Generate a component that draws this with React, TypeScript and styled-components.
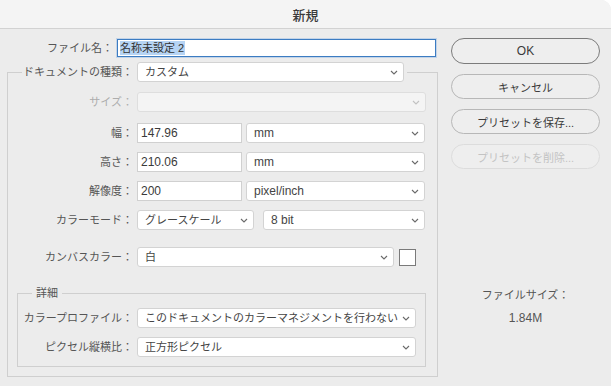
import React from "react";
import styled, { createGlobalStyle } from "styled-components";

const GlobalStyle = createGlobalStyle`
  html, body { margin: 0; padding: 0; background: #ffffff; }
  body { font-family: "Liberation Sans", "Noto Sans CJK JP", sans-serif; }
  *, *::before, *::after { box-sizing: border-box; }
`;

const Window = styled.div`
  width: 611px;
  height: 386px;
  background: #ececec;
  border-top-right-radius: 10px;
  overflow: hidden;
  display: flex;
  flex-direction: column;
`;

const TitleBar = styled.div`
  height: 29px;
  flex: none;
  background: #f4f4f4;
  border-bottom: 1px solid #d2d2d2;
  display: flex;
  align-items: center;
  justify-content: center;
  font-size: 13px;
  font-weight: 500;
  color: #3a3a3a;
`;

const Body = styled.div`
  flex: 1;
  display: flex;
  padding: 9px 0 0 7px;
`;

const Main = styled.div`
  width: 431px;
  flex: none;
  display: flex;
  flex-direction: column;
  padding-top: 1px;
`;

const Side = styled.div`
  width: 149px;
  flex: none;
  margin-left: 13px;
  display: flex;
  flex-direction: column;
  gap: 10px;
`;

const Label = styled.span<{ $w: number; $disabled?: boolean }>`
  width: ${(p) => p.$w}px;
  flex: none;
  display: flex;
  justify-content: flex-end;
  font-size: 11px;
  line-height: 14px;
  white-space: nowrap;
  color: ${(p) => (p.$disabled ? "#adadad" : "#555555")};
`;

const FileRow = styled.div`
  display: flex;
  align-items: center;
  gap: 4px;
  height: 18px;
`;

const FileInput = styled.div`
  width: 319px;
  height: 18px;
  background: #ffffff;
  border: 1px solid #3c7cc2;
  box-shadow: 0 0 0 1px rgba(120, 170, 225, 0.35);
  padding-left: 2px;
  display: flex;
  align-items: center;
`;

const Selected = styled.span`
  background: #b6d4f4;
  color: #333;
  font-size: 11px;
  line-height: 14px;
  padding-right: 1px;
`;

const OuterGroup = styled.fieldset`
  margin: 5px 0 0 0;
  min-width: 0;
  width: 431px;
  border: 1px solid #cfcfcf;
  padding: 10px 11px 9px 9px;
`;

const OuterLegend = styled.legend`
  margin-left: 5px;
  padding: 0 3px 0 0;
`;

const LegendInner = styled.div`
  display: flex;
  align-items: center;
  gap: 4px;
`;

const DetailGroup = styled.fieldset`
  margin: 19px 0 0 0;
  min-width: 0;
  border: 1px solid #cfcfcf;
  padding: 8px 10px 9px 14px;
`;

const DetailLegend = styled.legend`
  padding: 0 4px;
  font-size: 11px;
  line-height: 14px;
  color: #555555;
`;

const Row = styled.div<{ $mt?: number }>`
  display: flex;
  align-items: center;
  gap: 4px;
  height: 20px;
  margin-top: ${(p) => p.$mt ?? 0}px;
`;

const Controls = styled.div<{ $gap: number }>`
  display: flex;
  align-items: center;
  gap: ${(p) => p.$gap}px;
`;

const SelectBox = styled.div<{ $w: number; $disabled?: boolean }>`
  width: ${(p) => p.$w}px;
  height: 20px;
  flex: none;
  background: ${(p) => (p.$disabled ? "#f4f4f4" : "#ffffff")};
  border: 1px solid ${(p) => (p.$disabled ? "#dedede" : "#d3d3d3")};
  border-radius: 3px;
  display: flex;
  align-items: center;
  justify-content: space-between;
  padding: 0 5px 0 7px;
  color: #444;
`;

const ValueText = styled.span<{ $latin?: boolean }>`
  font-size: ${(p) => (p.$latin ? 12 : 11)}px;
  line-height: 14px;
  white-space: nowrap;
  overflow: hidden;
`;

const TextInput = styled.div<{ $w: number }>`
  width: ${(p) => p.$w}px;
  height: 20px;
  flex: none;
  background: #ffffff;
  border: 1px solid #d0d0d0;
  padding-left: 3px;
  display: flex;
  align-items: center;
  font-size: 12px;
  color: #3a3a3a;
`;

const Swatch = styled.div`
  width: 17px;
  height: 17px;
  flex: none;
  background: #ffffff;
  border: 1px solid #7a7a7a;
`;

const Chevron = styled.svg<{ $disabled?: boolean }>`
  flex: none;
  margin-left: 4px;
  stroke: ${(p) => (p.$disabled ? "#c2c2c2" : "#6a6a6a")};
`;

const Btn = styled.button<{ $primary?: boolean }>`
  height: ${(p) => (p.$primary ? 26 : 25)}px;
  width: 149px;
  padding: 0;
  border-radius: 13px;
  border: 1px solid ${(p) => (p.$primary ? "#7b7b7b" : "#b7b7b7")};
  background: #eeeeee;
  font-family: inherit;
  font-size: ${(p) => (p.$primary ? 12 : 11)}px;
  color: #3a3a3a;
  &:disabled {
    color: #c3c3c3;
    border-color: #dcdcdc;
  }
`;

const FileSize = styled.div`
  margin-top: 109px;
  display: flex;
  flex-direction: column;
  align-items: center;
  gap: 9px;
  color: #555555;
`;

const SizeLabel = styled.span`
  font-size: 11px;
  line-height: 14px;
`;

const SizeValue = styled.span`
  font-size: 12px;
  line-height: 14px;
`;

const ChevronIcon = ({ disabled }: { disabled?: boolean }) => (
  <Chevron $disabled={disabled} width="8" height="5" viewBox="0 0 8 5" fill="none" strokeWidth="1.1">
    <path d="M1 1l3 3 3-3" />
  </Chevron>
);

const Select = ({ w, value, latin, disabled }: { w: number; value: string; latin?: boolean; disabled?: boolean }) => (
  <SelectBox $w={w} $disabled={disabled}>
    <ValueText $latin={latin}>{value}</ValueText>
    <ChevronIcon disabled={disabled} />
  </SelectBox>
);

export default function App() {
  return (
    <>
      <GlobalStyle />
      <Window>
        <TitleBar>新規</TitleBar>
        <Body>
          <Main>
            <FileRow>
              <Label $w={106}>ファイル名：</Label>
              <FileInput>
                <Selected>名称未設定 2</Selected>
              </FileInput>
            </FileRow>
            <OuterGroup>
              <OuterLegend>
                <LegendInner>
                  <Label $w={111}>ドキュメントの種類：</Label>
                  <Select w={267} value="カスタム" />
                </LegendInner>
              </OuterLegend>
              <Row>
                <Label $w={116} $disabled>サイズ：</Label>
                <Select w={289} value="" disabled />
              </Row>
              <Row $mt={11}>
                <Label $w={116}>幅：</Label>
                <Controls $gap={4}>
                  <TextInput $w={105}>147.96</TextInput>
                  <Select w={179} value="mm" latin />
                </Controls>
              </Row>
              <Row $mt={9}>
                <Label $w={116}>高さ：</Label>
                <Controls $gap={4}>
                  <TextInput $w={105}>210.06</TextInput>
                  <Select w={179} value="mm" latin />
                </Controls>
              </Row>
              <Row $mt={9}>
                <Label $w={116}>解像度：</Label>
                <Controls $gap={4}>
                  <TextInput $w={105}>200</TextInput>
                  <Select w={179} value="pixel/inch" latin />
                </Controls>
              </Row>
              <Row $mt={9}>
                <Label $w={116}>カラーモード：</Label>
                <Controls $gap={9}>
                  <Select w={117} value="グレースケール" />
                  <Select w={162} value="8 bit" latin />
                </Controls>
              </Row>
              <Row $mt={17}>
                <Label $w={116}>カンバスカラー：</Label>
                <Controls $gap={5}>
                  <Select w={257} value="白" />
                  <Swatch />
                </Controls>
              </Row>
              <DetailGroup>
                <DetailLegend>詳細</DetailLegend>
                <Row>
                  <Label $w={101}>カラープロファイル：</Label>
                  <Select w={279} value="このドキュメントのカラーマネジメントを行わない" />
                </Row>
                <Row $mt={9}>
                  <Label $w={101}>ピクセル縦横比：</Label>
                  <Select w={279} value="正方形ピクセル" />
                </Row>
              </DetailGroup>
            </OuterGroup>
          </Main>
          <Side>
            <Btn $primary>OK</Btn>
            <Btn>キャンセル</Btn>
            <Btn>プリセットを保存...</Btn>
            <Btn disabled>プリセットを削除...</Btn>
            <FileSize>
              <SizeLabel>ファイルサイズ：</SizeLabel>
              <SizeValue>1.84M</SizeValue>
            </FileSize>
          </Side>
        </Body>
      </Window>
    </>
  );
}
